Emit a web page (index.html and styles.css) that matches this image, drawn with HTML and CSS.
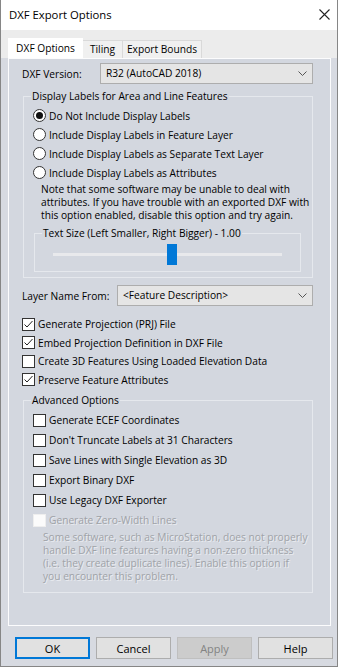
FILE: index.html
```html
<!DOCTYPE html>
<html>
<head>
<meta charset="utf-8">
<link rel="stylesheet" href="styles.css">
</head>
<body>
<div class="window">
  <div class="titlebar">
    <span class="title">DXF Export Options</span>
    <svg class="close" width="11" height="11" viewBox="0 0 11 11"><path d="M0.5 0.5 L10.5 10.5 M10.5 0.5 L0.5 10.5" stroke="#222" stroke-width="1.1" fill="none"/></svg>
  </div>
  <div class="tabbar">
    <div class="tab active t1">DXF Options</div>
    <div class="tab t2">Tiling</div>
    <div class="tab t3">Export Bounds</div>
  </div>
  <div class="content">
    <div class="panel">
      <div class="field-row version-row">
        <span class="field-label">DXF Version:</span>
        <div class="select version-select"><span>R32 (AutoCAD 2018)</span><svg class="chev" width="9" height="5" viewBox="0 0 9 5"><path d="M0.5 0.5 L4.5 4.5 L8.5 0.5" stroke="#555" stroke-width="1" fill="none"/></svg></div>
      </div>

      <fieldset class="group labels-group">
        <legend>Display Labels for Area and Line Features</legend>
        <div class="radio-row"><span class="radio checked"></span>Do Not Include Display Labels</div>
        <div class="radio-row"><span class="radio"></span>Include Display Labels in Feature Layer</div>
        <div class="radio-row"><span class="radio"></span>Include Display Labels as Separate Text Layer</div>
        <div class="radio-row"><span class="radio"></span>Include Display Labels as Attributes</div>
        <p class="note">Note that some software may be unable to deal with<br>attributes. If you have trouble with an exported DXF with<br>this option enabled, disable this option and try again.</p>
        <fieldset class="group slider-group">
          <legend>Text Size (Left Smaller, Right Bigger) - 1.00</legend>
          <div class="slider"><div class="track"></div><div class="thumb"></div></div>
        </fieldset>
      </fieldset>

      <div class="field-row layer-row">
        <span class="field-label">Layer Name From:</span>
        <div class="select layer-select"><span>&lt;Feature Description&gt;</span><svg class="chev" width="9" height="5" viewBox="0 0 9 5"><path d="M0.5 0.5 L4.5 4.5 L8.5 0.5" stroke="#555" stroke-width="1" fill="none"/></svg></div>
      </div>

      <div class="checks">
        <div class="check-row"><span class="cb"><svg width="11" height="11" viewBox="0 0 11 11"><path d="M1.5 5.5 L4 8 L9.5 2" stroke="#222" stroke-width="1" fill="none"/></svg></span>Generate Projection (PRJ) File</div>
        <div class="check-row"><span class="cb"><svg width="11" height="11" viewBox="0 0 11 11"><path d="M1.5 5.5 L4 8 L9.5 2" stroke="#222" stroke-width="1" fill="none"/></svg></span>Embed Projection Definition in DXF File</div>
        <div class="check-row"><span class="cb"></span>Create 3D Features Using Loaded Elevation Data</div>
        <div class="check-row"><span class="cb"><svg width="11" height="11" viewBox="0 0 11 11"><path d="M1.5 5.5 L4 8 L9.5 2" stroke="#222" stroke-width="1" fill="none"/></svg></span>Preserve Feature Attributes</div>
      </div>

      <fieldset class="group adv-group">
        <legend>Advanced Options</legend>
        <div class="check-row adv"><span class="cb"></span>Generate ECEF Coordinates</div>
        <div class="check-row adv"><span class="cb"></span>Don't Truncate Labels at 31 Characters</div>
        <div class="check-row adv"><span class="cb"></span>Save Lines with Single Elevation as 3D</div>
        <div class="check-row adv"><span class="cb"></span>Export Binary DXF</div>
        <div class="check-row adv"><span class="cb"></span>Use Legacy DXF Exporter</div>
        <div class="check-row adv disabled"><span class="cb"></span>Generate Zero-Width Lines</div>
        <p class="note disabled-note">Some software, such as MicroStation, does not properly<br>handle DXF line features having a non-zero thickness<br>(i.e. they create duplicate lines). Enable this option if<br>you encounter this problem.</p>
      </fieldset>
    </div>
  </div>
  <div class="buttons">
    <div class="btn default">OK</div>
    <div class="btn">Cancel</div>
    <div class="btn disabled-btn">Apply</div>
    <div class="btn">Help</div>
  </div>
</div>
</body>
</html>
```
FILE: styles.css
```css
* { box-sizing: border-box; }
html, body { margin: 0; padding: 0; background: #ffffff; }
body {
  font-family: "Segoe UI", "Open Sans", "Liberation Sans", sans-serif;
  font-size: 10.2px;
  color: #000;
}
.window {
  width: 338px;
  height: 667px;
  border: 1px solid #868686;
  border-top: none;
  display: flex;
  flex-direction: column;
  background: #d7dae1;
}
.titlebar {
  height: 30px;
  flex: none;
  background: #fff;
  display: flex;
  align-items: center;
  justify-content: space-between;
  padding: 0 7px 1px 8px;
}
.title { font-size: 11.3px; }
.close { display: block; }

.tabbar {
  height: 28px;
  flex: none;
  background: #ececec;
  padding: 8px 0 0 7px;
  display: flex;
  align-items: flex-end;
}
.tab {
  height: 18px;
  line-height: 16px;
  text-align: center;
  background: #f0f0f0;
  border: 1px solid #d9d9d9;
  border-bottom: none;
  margin-left: -1px;
}
.tab.active {
  height: 20px;
  line-height: 19px;
  background: #fff;
  border-color: #fff;
  margin-left: 0;
  position: relative;
  z-index: 1;
}
.t1 { width: 75px; }
.t2 { width: 41px; }
.t3 { width: 80px; }

.content {
  flex: 1;
  display: flex;
  padding: 0 6px 0 7px;
}
.panel {
  flex: 1;
  background: #d3d7df;
  border: 1px solid #fcfcfd;
  padding: 4px 17px 0 13px;
  display: flex;
  flex-direction: column;
}

.field-row {
  display: flex;
  align-items: center;
  height: 21px;
}
.field-label { flex: none; }
.version-row .field-label { width: 78px; }
.layer-row { margin-top: 7px; }
.layer-row .field-label { width: 95px; }
.select {
  flex: 1;
  height: 21px;
  background: #e5e5e5;
  border: 1px solid #adadad;
  display: flex;
  align-items: center;
  justify-content: space-between;
  padding: 0 5px 1px 5px;
}
.chev { display: block; margin-top: 1px; }

.group {
  margin: 0;
  padding: 0 0 0 7px;
  border: 1px solid #e5e8ed;
  min-width: 0;
}
.group legend {
  padding: 0 1px;
  line-height: 14px;
}
.labels-group { margin: 5px 0 0 1px; padding-top: 3px; padding-bottom: 5px; }
.radio-row {
  height: 19px;
  display: flex;
  align-items: center;
  margin-left: 2px;
  white-space: nowrap;
}
.radio {
  width: 13px;
  height: 13px;
  border: 1px solid #333;
  border-radius: 50%;
  background: #fff;
  margin-right: 3px;
  display: flex;
  align-items: center;
  justify-content: center;
  flex: none;
}
.radio.checked::after {
  content: "";
  width: 7px;
  height: 7px;
  border-radius: 50%;
  background: #111;
}
.note {
  margin: 1px 0 0 10px;
  line-height: 13px;
  white-space: nowrap;
}
.slider-group {
  margin: 4px 11px 0 3px;
  padding: 4px 0 6px 7px;
}
.slider {
  position: relative;
  height: 21px;
  margin: 0 18px 0 11px;
}
.track {
  position: absolute;
  left: 0;
  right: 0;
  top: 9px;
  height: 3px;
  background: #e8e9ec;
}
.thumb {
  position: absolute;
  left: 114px;
  top: 0;
  width: 10px;
  height: 21px;
  background: #0078d7;
}

.checks { margin-top: 9px; }
.check-row {
  height: 18.5px;
  display: flex;
  align-items: center;
  white-space: nowrap;
}
.cb {
  width: 13px;
  height: 13px;
  border: 1px solid #333;
  background: #fff;
  margin-right: 3px;
  flex: none;
  display: flex;
  align-items: center;
  justify-content: center;
}
.cb svg { display: block; }

.adv-group { margin: 4px 0 0 1px; padding-top: 3px; padding-bottom: 9px; }
.check-row.adv { height: 20px; margin-left: 2px; }
.check-row.disabled { color: #9ea1a6; text-shadow: 1px 1px 0 rgba(255,255,255,0.55); }
.check-row.disabled .cb { border-color: #eeeeee; background: #fbfbfb; }
.disabled-note {
  margin: 1px 0 0 12px;
  color: #a0a3a8;
  text-shadow: 1px 1px 0 rgba(255,255,255,0.55);
}

.buttons {
  height: 40px;
  flex: none;
  display: flex;
  gap: 6px;
  padding: 11px 0 0 14px;
}
.btn {
  width: 75px;
  height: 22px;
  background: #e1e1e1;
  border: 1px solid #adadad;
  display: flex;
  align-items: center;
  justify-content: center;
  font-size: 11px;
}
.btn.default { border: 2px solid #0078d7; }
.btn.disabled-btn { background: #cccccc; border-color: #bfbfbf; color: #838383; }
```
